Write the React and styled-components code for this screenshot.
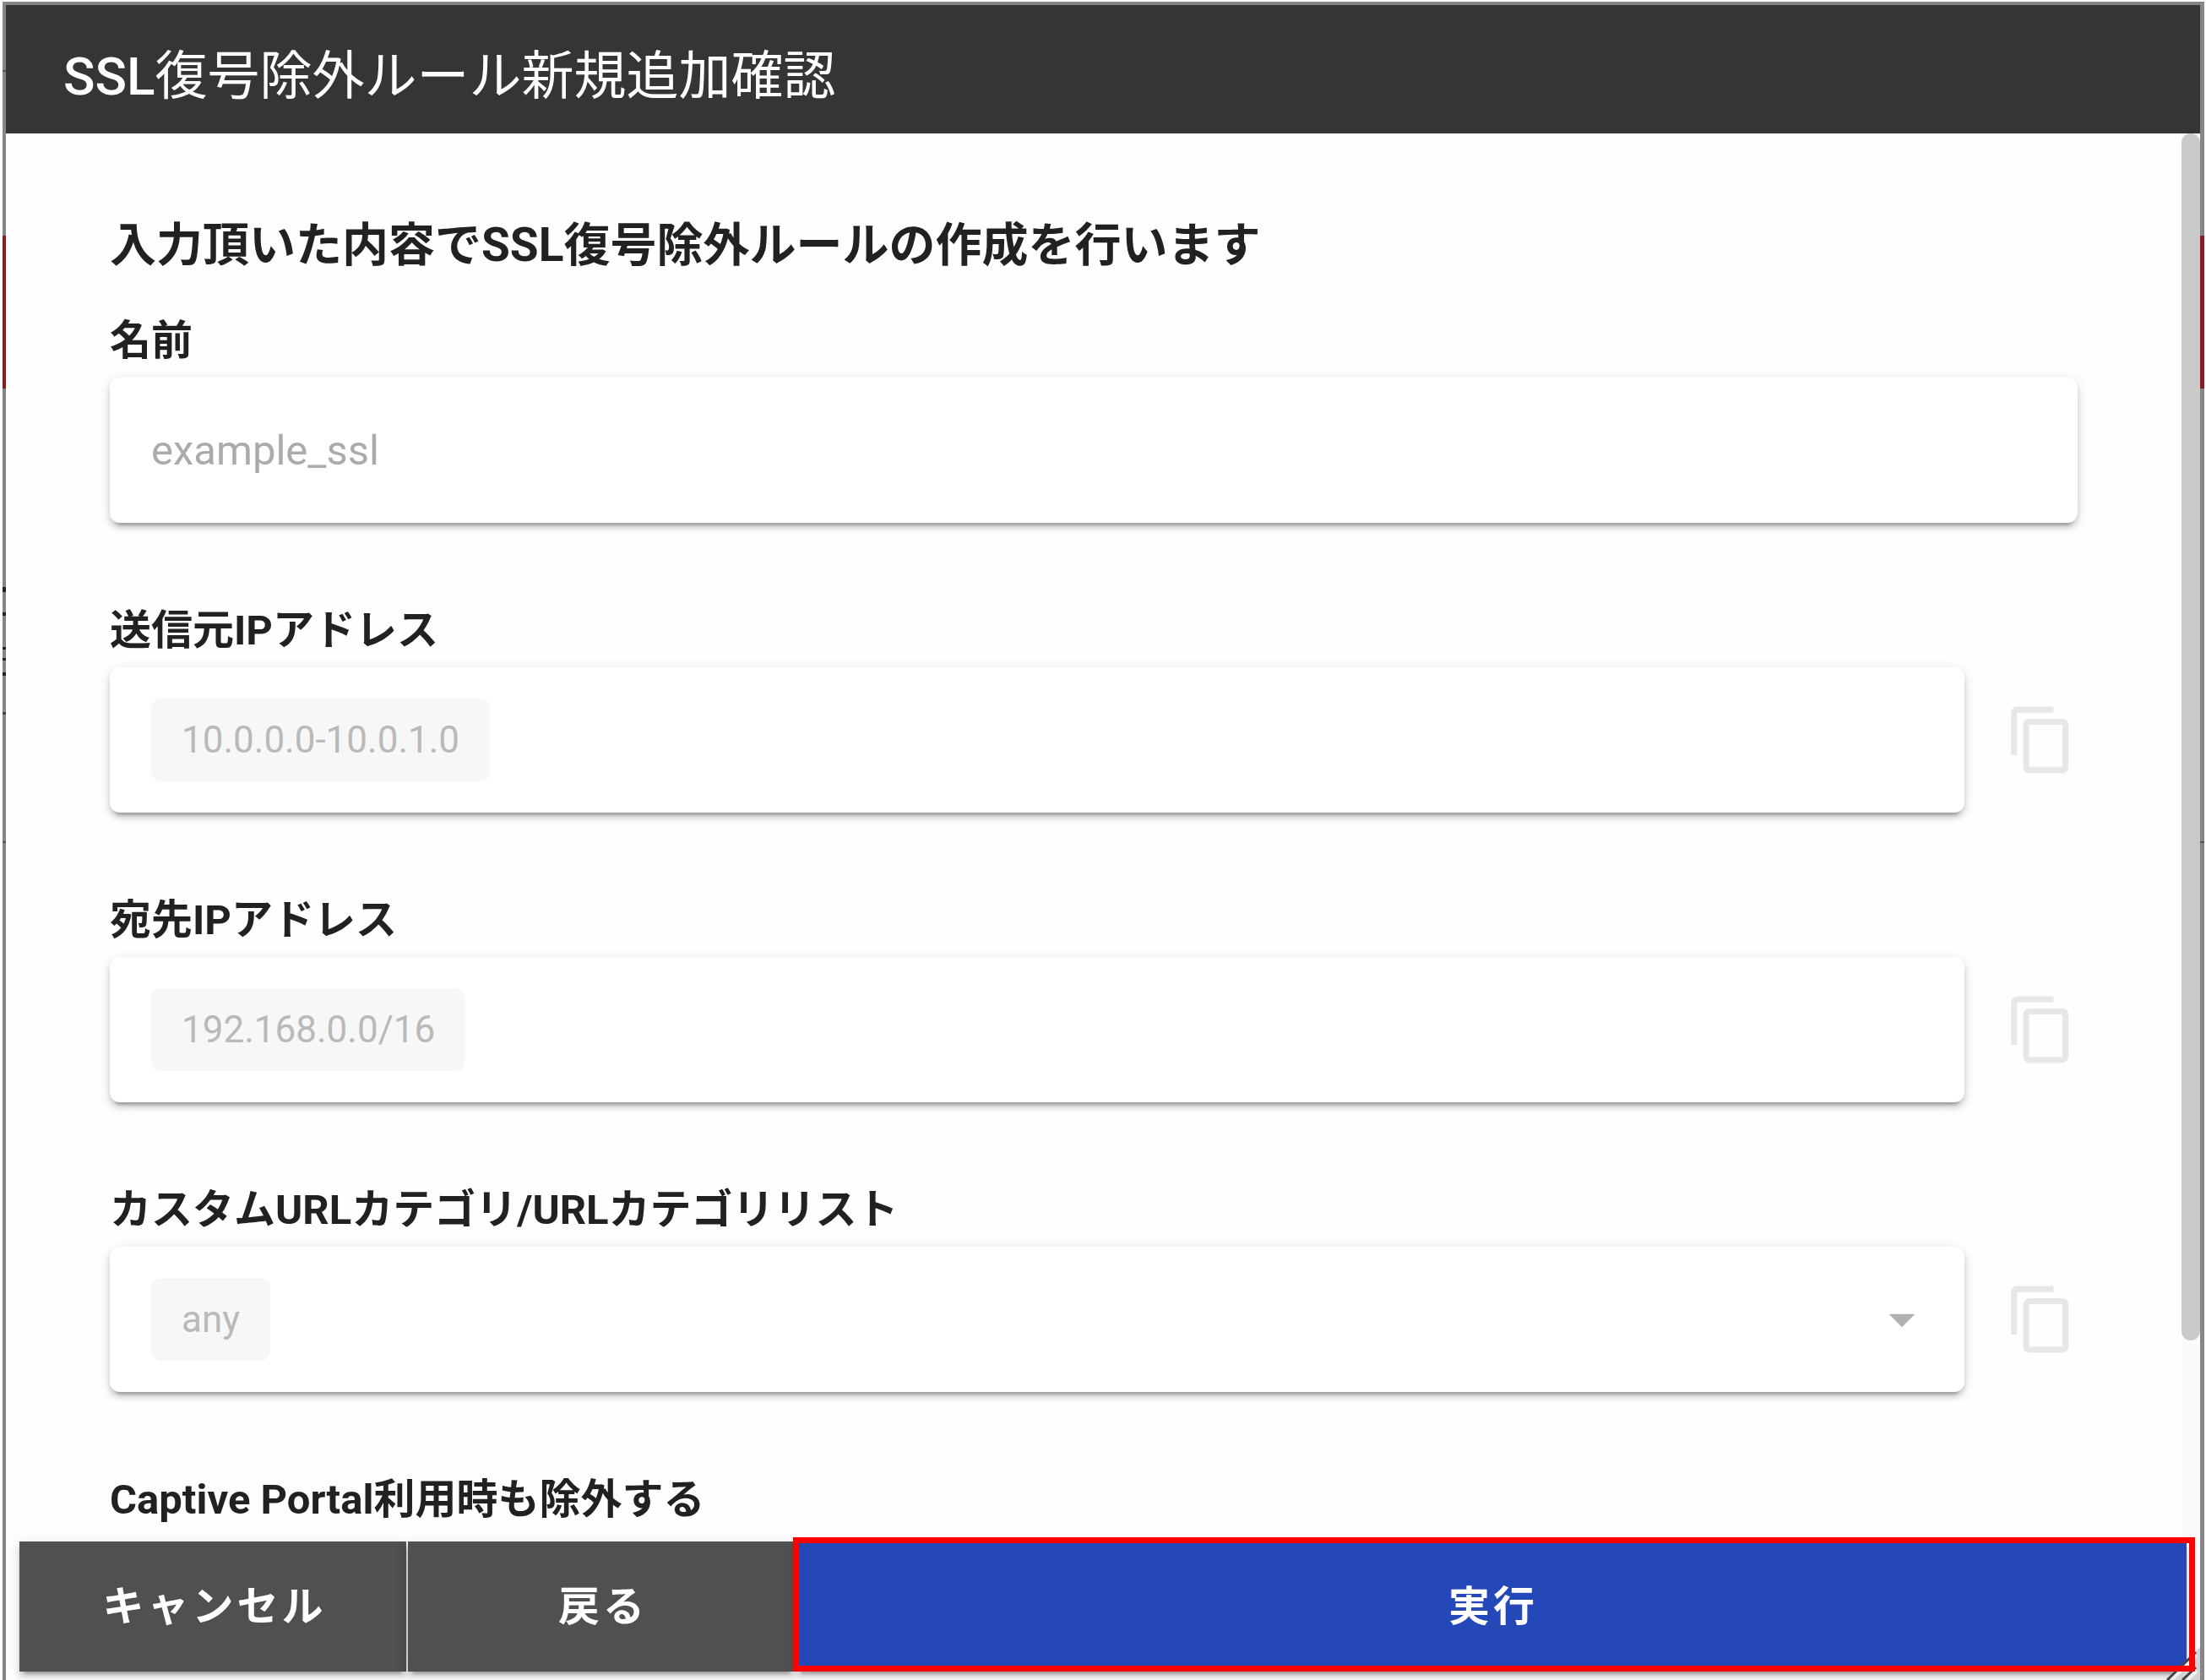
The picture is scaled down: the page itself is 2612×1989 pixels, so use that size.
import React from "react";
import styled, { createGlobalStyle } from "styled-components";

const SOURCE_LABEL = "送信元IPアドレス";
const DEST_LABEL = "宛先IPアドレス";
const CATEGORY_LABEL = "カスタムURLカテゴリ/URLカテゴリリスト";

function CopyIcon() {
  return (
    <svg viewBox="0 0 24 24" aria-hidden="true">
      <path d="M19,21H8V7H19M19,5H8A2,2 0 0,0 6,7V21A2,2 0 0,0 8,23H19A2,2 0 0,0 21,21V7A2,2 0 0,0 19,5M16,1H4A2,2 0 0,0 2,3V17H4V3H16V1Z" />
    </svg>
  );
}

function ChipField({ label, value, children }) {
  return (
    <Field>
      <Label as="h3">{label}</Label>
      <Row>
        <Box>
          <Chip>{value}</Chip>
          {children}
        </Box>
        <CopyButton type="button" aria-label={`${label}をコピー`} disabled>
          <CopyIcon />
        </CopyButton>
      </Row>
    </Field>
  );
}

function App() {
  return (
    <>
      <GlobalStyle />
      <Backdrop>
        <Sliver $top={277} $height={181} $color="#8a1c20" />
        <Sliver $top={277} $height={181} $color="#8a1c20" $right />
        <Sliver $top={81} $height={2} />
        <Sliver $top={693} $height={6} $color="#222" />
        <Sliver $top={723} $height={4} $color="#222" />
        <Sliver $top={764} $height={3} $color="#222" />
        <Sliver $top={777} $height={3} $color="#222" />
        <Sliver $top={794} $height={4} $color="#222" />
        <Sliver $top={841} $height={3} $color="#444" />
        <Sliver $top={994} $height={2} />
        <Sliver $top={994} $height={2} $right />
        <Dialog role="dialog" aria-labelledby="dialog-title">
          <Header>
            <h1 id="dialog-title">
              <b>SSL</b>復号除外ルール新規追加確認
            </h1>
          </Header>
          <Body>
            <Content>
              <Lead>入力頂いた内容でSSL復号除外ルールの作成を行います</Lead>
              <Field>
                <Label htmlFor="rule-name">名前</Label>
                <Row>
                  <NameInput id="rule-name" defaultValue="example_ssl" disabled />
                </Row>
              </Field>
              <ChipField label={SOURCE_LABEL} value="10.0.0.0-10.0.1.0" />
              <ChipField label={DEST_LABEL} value="192.168.0.0/16" />
              <ChipField label={CATEGORY_LABEL} value="any">
                <Arrow viewBox="0 0 24 24" aria-hidden="true">
                  <path d="M7,10L12,15L17,10H7Z" />
                </Arrow>
              </ChipField>
              <Field>
                <Label as="h3">Captive Portal利用時も除外する</Label>
              </Field>
            </Content>
            <ScrollTrack>
              <ScrollThumb />
            </ScrollTrack>
          </Body>
          <Footer>
            <FooterButton type="button">キャンセル</FooterButton>
            <FooterButton type="button">戻る</FooterButton>
            <FooterButton type="button" $primary>
              実行
            </FooterButton>
            <ResizeGrip viewBox="0 0 40 40" aria-hidden="true">
              <path d="M40 1L1 40H40Z" fill="#d4d4d4" />
              <path d="M6 40L36 11M25 40L36 29" stroke="#f2f2f2" strokeWidth="4" />
              <path d="M1 40L35 7M19 40L35 25" stroke="#444" strokeWidth="3" />
            </ResizeGrip>
            <Highlight />
          </Footer>
        </Dialog>
      </Backdrop>
    </>
  );
}

export default App;

const GlobalStyle = createGlobalStyle`
  * {
    box-sizing: border-box;
  }
  body {
    margin: 0;
    background: #fff;
    color: #212121;
    font-family: Roboto, "Noto Sans CJK JP", sans-serif;
  }
  h1, h2, h3 {
    margin: 0;
  }
  button, input {
    font-family: inherit;
  }
`;

const Backdrop = styled.div`
  position: relative;
  height: 100vh;
  padding: 4px 5px 0 4px;
  border: solid #fff;
  border-width: 2px 2px 0 3px;
  background: #868686;
  overflow: hidden;
`;

/* page content that shows at the sides of the dialog */
const Sliver = styled.div`
  position: absolute;
  top: ${({ $top }) => $top}px;
  ${({ $right }) => ($right ? "right: 0;" : "left: 0;")}
  width: 5px;
  height: ${({ $height }) => $height}px;
  background: ${({ $color }) => $color || "#555"};
`;

const Dialog = styled.div`
  position: relative;
  display: flex;
  flex-direction: column;
  height: 100%;
  background: #fefefe;
`;

const Header = styled.header`
  flex: none;
  padding: 44px 68px 26px;
  background: #353535;
  color: #fff;

  h1 {
    font-size: 62px;
    line-height: 82px;
    font-weight: 400;
  }
  b {
    font-weight: 500;
  }
`;

const Body = styled.div`
  flex: 1;
  min-height: 0;
  display: flex;
`;

const Content = styled.main`
  flex: 1;
  min-width: 0;
  padding: 96px 123px 0;
  overflow: hidden;
`;

const Lead = styled.h2`
  margin-bottom: 41px;
  font-size: 55px;
  line-height: 72px;
  font-weight: 700;
`;

const Field = styled.div`
  margin-bottom: 91px;
`;

const Label = styled.label`
  display: block;
  margin-bottom: 6px;
  font-size: 49px;
  line-height: 74px;
  font-weight: 700;
`;

const Row = styled.div`
  display: flex;
  align-items: center;
  gap: 48px;
`;

const Box = styled.div`
  flex: 1;
  min-width: 0;
  height: 172px;
  display: flex;
  align-items: center;
  justify-content: space-between;
  padding: 0 37px 0 49px;
  border-radius: 12px;
  background: #fff;
  box-shadow: 0 9px 3px -6px rgba(0, 0, 0, 0.2),
    0 6px 6px 0 rgba(0, 0, 0, 0.14), 0 3px 15px 0 rgba(0, 0, 0, 0.12);
`;

const NameInput = styled(Box).attrs({ as: "input" })`
  border: 0;
  font-size: 49px;
  color: #ababab;
`;

const Chip = styled.span`
  padding: 0 36px;
  border-radius: 12px;
  background: #f7f7f7;
  color: #b9b9b9;
  font-size: 44px;
  line-height: 98px;
`;

const CopyButton = styled.button`
  flex: none;
  display: flex;
  padding: 0;
  border: 0;
  background: none;

  svg {
    width: 86px;
    height: 86px;
    fill: #e7e7e7;
  }
`;

const Arrow = styled.svg`
  width: 74px;
  height: 74px;
  fill: #b0b0b0;
`;

const ScrollTrack = styled.div`
  flex: none;
  width: 22px;
  background: #fafafa;
`;

const ScrollThumb = styled.div`
  height: 86%;
  border-radius: 12px;
  background: #cacaca;
`;

const Footer = styled.footer`
  position: relative;
  flex: none;
  display: flex;
  gap: 2px;
  padding: 5px 16px 10px;
`;

const FooterButton = styled.button`
  flex: ${({ $primary }) => ($primary ? "1" : "none")};
  width: 458px;
  height: 154px;
  padding: 0 0 10px 4px;
  border: 0;
  background: ${({ $primary }) => ($primary ? "#2548b8" : "#505050")};
  color: #fff;
  font-size: 49px;
  font-weight: 700;
  letter-spacing: 4px;
  box-shadow: 0 9px 3px -6px rgba(0, 0, 0, 0.2),
    0 6px 6px 0 rgba(0, 0, 0, 0.14), 0 3px 15px 0 rgba(0, 0, 0, 0.12);
`;

/* starts on the edge of the second button */
const Highlight = styled.div`
  position: absolute;
  top: 0;
  bottom: 10px;
  left: 932px;
  right: 6px;
  border: 7px solid #f00;
  pointer-events: none;
`;

const ResizeGrip = styled.svg`
  position: absolute;
  right: 0;
  bottom: 0;
  width: 40px;
  height: 40px;
`;
